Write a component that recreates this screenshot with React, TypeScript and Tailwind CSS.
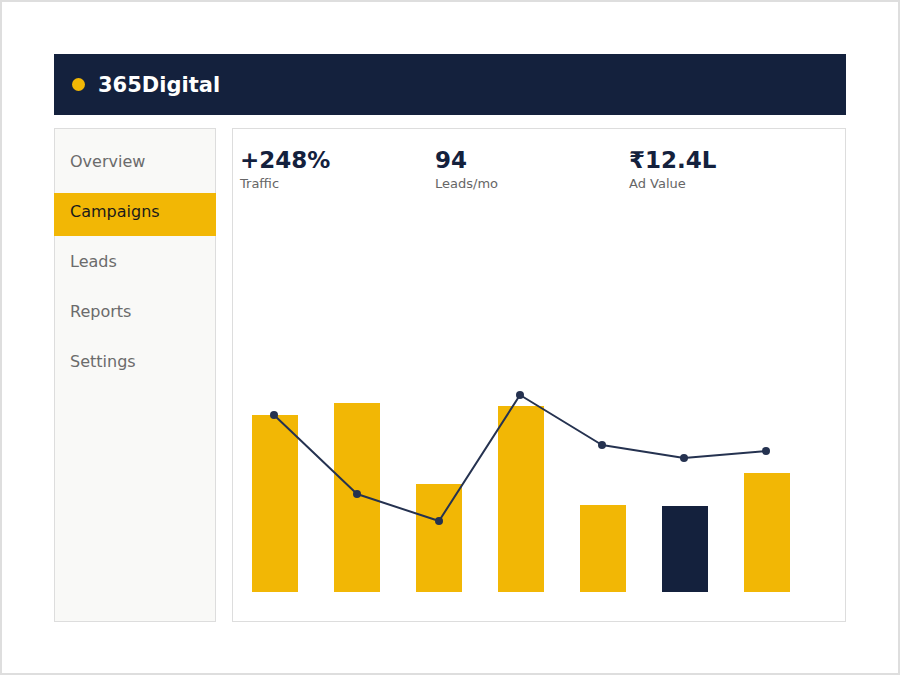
const NAV = ['Overview', 'Campaigns', 'Leads', 'Reports', 'Settings']

const STATS = [
  { value: '+248%', label: 'Traffic', w: 'w-[195px]' },
  { value: '94', label: 'Leads/mo', w: 'w-[194px]' },
  { value: '₹12.4L', label: 'Ad Value', w: 'w-[180px]' },
]

// chart coords are relative to the svg box (612 x 220, bottom = bar baseline)
const BARS = [
  { x: 19, top: 43, dark: false },
  { x: 101, top: 31, dark: false },
  { x: 183, top: 112, dark: false },
  { x: 265, top: 34, dark: false },
  { x: 347, top: 133, dark: false },
  { x: 429, top: 134, dark: true },
  { x: 511, top: 101, dark: false },
]

const POINTS: [number, number][] = [
  [41, 43],
  [124, 122],
  [206, 149],
  [287, 23],
  [369, 73],
  [451, 86],
  [533, 79],
]

function Chart() {
  return (
    <svg width="612" height="220" viewBox="0 0 612 220" className="block">
      {BARS.map((b, i) => (
        <rect key={i} x={b.x} y={b.top} width={46} height={220 - b.top} fill={b.dark ? '#14213d' : '#f2b705'} />
      ))}
      <polyline
        points={POINTS.map(p => p.join(',')).join(' ')}
        fill="none"
        stroke="#253250"
        strokeWidth={2}
        strokeLinejoin="round"
      />
      {POINTS.map(([x, y], i) => (
        <circle key={i} cx={x} cy={y} r={4} fill="#253250" />
      ))}
    </svg>
  )
}

export default function App() {
  return (
    <div className="w-[900px] h-[675px] bg-white border-2 border-[#dedede] p-[52px] font-['DejaVu_Sans',sans-serif]">
      {/* Header */}
      <div className="h-[61px] bg-[#14213d] flex items-center pl-[18px] gap-[13px]">
        <span className="w-[13px] h-[13px] rounded-full bg-[#f2b705]" />
        <span className="text-white font-bold text-[21px] leading-none mt-[2px]">365Digital</span>
      </div>

      <div className="flex gap-4 mt-[13px] h-[494px]">
        {/* Sidebar */}
        <div className="w-[162px] bg-[#f9f9f7] border border-[#dddddd] pt-[14px] flex flex-col gap-[7px]">
          {NAV.map(item => (
            <div
              key={item}
              className={`h-[43px] -mx-px px-4 pt-[8px] text-[16px] leading-[22px] ${
                item === 'Campaigns' ? 'bg-[#f2b705] text-[#1a1a1a]' : 'text-[#6b6b6b]'
              }`}
            >
              {item}
            </div>
          ))}
        </div>

        {/* Main panel */}
        <div className="flex-1 bg-white border border-[#dddddd] flex flex-col">
          <div className="flex pl-[7px] pt-[18px]">
            {STATS.map(s => (
              <div key={s.label} className={s.w}>
                <p className="text-[23px] leading-[27px] font-bold text-[#14213d]">{s.value}</p>
                <p className="text-[13px] leading-[16px] text-[#666666] mt-[2px]">{s.label}</p>
              </div>
            ))}
          </div>
          <div className="mt-auto pb-[29px]">
            <Chart />
          </div>
        </div>
      </div>
    </div>
  )
}
